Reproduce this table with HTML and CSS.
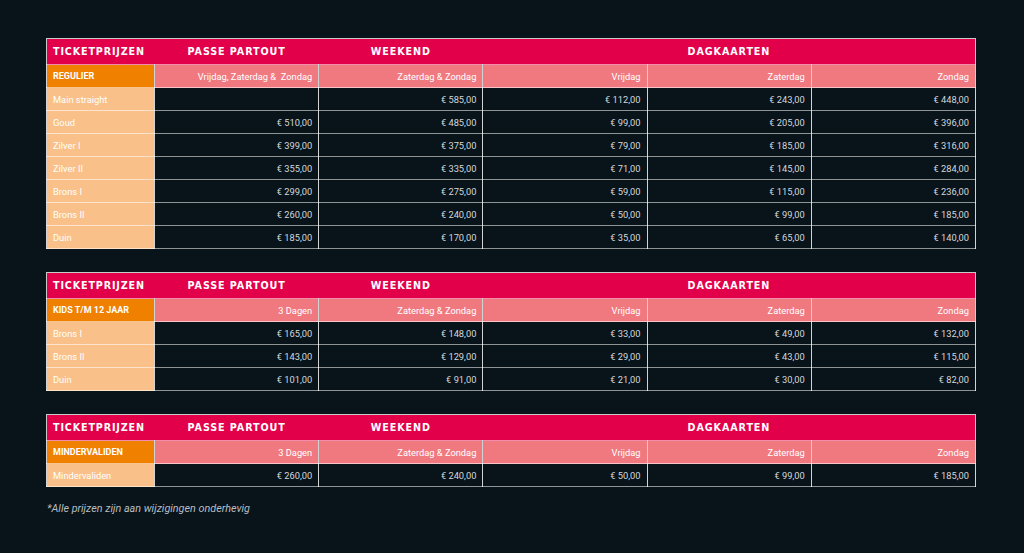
FILE: index.html
```html
<!DOCTYPE html>
<html lang="nl">
<head>
<meta charset="utf-8">
<title>Ticketprijzen</title>
<link rel="stylesheet" href="styles.css">
</head>
<body>
<main class="page">
  <table class="prices">
    <colgroup><col class="c-label"><col><col><col><col><col></colgroup>
    <tr class="head">
      <th class="t-left">TICKETPRIJZEN</th><th>PASSE PARTOUT</th><th>WEEKEND</th><th colspan="3">DAGKAARTEN</th>
    </tr>
    <tr class="sub">
      <td class="cat">REGULIER</td><td>Vrijdag, Zaterdag &amp;&nbsp; Zondag</td><td>Zaterdag &amp; Zondag</td><td>Vrijdag</td><td>Zaterdag</td><td>Zondag</td>
    </tr>
    <tr><td class="lab">Main straight</td><td></td><td>€ 585,00</td><td>€ 112,00</td><td>€ 243,00</td><td>€ 448,00</td></tr>
    <tr><td class="lab">Goud</td><td>€ 510,00</td><td>€ 485,00</td><td>€ 99,00</td><td>€ 205,00</td><td>€ 396,00</td></tr>
    <tr><td class="lab">Zilver I</td><td>€ 399,00</td><td>€ 375,00</td><td>€ 79,00</td><td>€ 185,00</td><td>€ 316,00</td></tr>
    <tr><td class="lab">Zilver II</td><td>€ 355,00</td><td>€ 335,00</td><td>€ 71,00</td><td>€ 145,00</td><td>€ 284,00</td></tr>
    <tr><td class="lab">Brons I</td><td>€ 299,00</td><td>€ 275,00</td><td>€ 59,00</td><td>€ 115,00</td><td>€ 236,00</td></tr>
    <tr><td class="lab">Brons II</td><td>€ 260,00</td><td>€ 240,00</td><td>€ 50,00</td><td>€ 99,00</td><td>€ 185,00</td></tr>
    <tr><td class="lab">Duin</td><td>€ 185,00</td><td>€ 170,00</td><td>€ 35,00</td><td>€ 65,00</td><td>€ 140,00</td></tr>
  </table>

  <table class="prices">
    <colgroup><col class="c-label"><col><col><col><col><col></colgroup>
    <tr class="head">
      <th class="t-left">TICKETPRIJZEN</th><th>PASSE PARTOUT</th><th>WEEKEND</th><th colspan="3">DAGKAARTEN</th>
    </tr>
    <tr class="sub">
      <td class="cat">KIDS T/M 12 JAAR</td><td>3 Dagen</td><td>Zaterdag &amp; Zondag</td><td>Vrijdag</td><td>Zaterdag</td><td>Zondag</td>
    </tr>
    <tr><td class="lab">Brons I</td><td>€ 165,00</td><td>€ 148,00</td><td>€ 33,00</td><td>€ 49,00</td><td>€ 132,00</td></tr>
    <tr><td class="lab">Brons II</td><td>€ 143,00</td><td>€ 129,00</td><td>€ 29,00</td><td>€ 43,00</td><td>€ 115,00</td></tr>
    <tr><td class="lab">Duin</td><td>€ 101,00</td><td>€ 91,00</td><td>€ 21,00</td><td>€ 30,00</td><td>€ 82,00</td></tr>
  </table>

  <table class="prices">
    <colgroup><col class="c-label"><col><col><col><col><col></colgroup>
    <tr class="head">
      <th class="t-left">TICKETPRIJZEN</th><th>PASSE PARTOUT</th><th>WEEKEND</th><th colspan="3">DAGKAARTEN</th>
    </tr>
    <tr class="sub">
      <td class="cat">MINDERVALIDEN</td><td>3 Dagen</td><td>Zaterdag &amp; Zondag</td><td>Vrijdag</td><td>Zaterdag</td><td>Zondag</td>
    </tr>
    <tr><td class="lab">Mindervaliden</td><td>€ 260,00</td><td>€ 240,00</td><td>€ 50,00</td><td>€ 99,00</td><td>€ 185,00</td></tr>
  </table>

  <p class="note">*Alle prijzen zijn aan wijzigingen onderhevig</p>
</main>
</body>
</html>
```

FILE: styles.css
```css
html, body {
  margin: 0;
  padding: 0;
  background: #08131a;
}
.page {
  padding: 38px 0 0 46px;
  display: flex;
  flex-direction: column;
  gap: 23px;
  font-family: Roboto, "Liberation Sans", sans-serif;
}
.prices {
  width: 930px;
  border-collapse: collapse;
  table-layout: fixed;
  border: 1px solid #c9c9c9;
}
.c-label { width: 108px; }
.prices td {
  height: 22px;
  padding: 0 6px;
  border-left: 1px solid #d2d2d2;
  border-right: 1px solid #d2d2d2;
  border-top: 1px solid rgba(255, 255, 255, 0.55);
  border-bottom: 1px solid rgba(255, 255, 255, 0.55);
  text-align: right;
  font-size: 9.3px;
  color: #d4d8da;
  white-space: nowrap;
}
.head th {
  height: 25px;
  padding: 0 7px;
  background: #e3004b;
  color: #ffffff;
  font-family: "DejaVu Sans", Verdana, sans-serif;
  font-weight: bold;
  font-size: 9.6px;
  letter-spacing: 0.9px;
  text-align: center;
  border: none;
}
.head th.t-left { text-align: left; padding-left: 6px; letter-spacing: 0.85px; }
.sub td {
  background: #f07980;
  color: #ffffff;
}
.sub td.cat {
  background: #f08000;
  text-align: left;
  font-weight: bold;
  font-size: 9px;
}
td.lab {
  background: #f9c189;
  color: #ffffff;
  text-align: left;
}
.note {
  margin: -8px 0 0 1px;
  font-size: 10.8px;
  font-style: italic;
  color: #b8bec2;
  font-family: Roboto, "Liberation Sans", sans-serif;
}
```
